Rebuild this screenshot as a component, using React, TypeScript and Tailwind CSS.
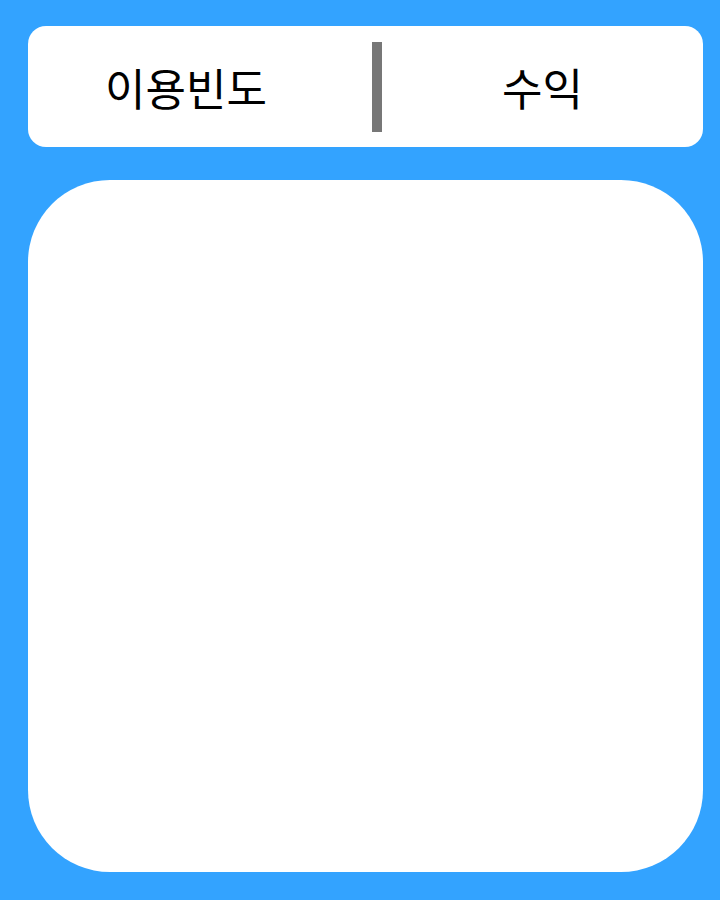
import React from 'react';

const font = { fontFamily: '"Noto Sans CJK KR", "Noto Sans", sans-serif' };

const App: React.FC = () => {
    return (
        <div className="w-[720px] h-[900px] bg-[#33a3ff] pl-[28px] pr-[17px] pt-[26px] flex flex-col" style={font}>
            <div className="h-[121px] bg-white rounded-[18px] flex items-center">
                <div className="w-[316px] flex justify-center">
                    <span className="text-[44px] leading-none font-normal text-black">이용빈도</span>
                </div>
                <div className="ml-[28px] w-[10px] h-[90px] bg-[#777777]"></div>
                <div className="flex-1 flex justify-center">
                    <span className="text-[44px] leading-none font-normal text-black">수익</span>
                </div>
            </div>
            <div className="mt-[33px] h-[692px] bg-white rounded-[82px]"></div>
        </div>
    );
};

export default App;
